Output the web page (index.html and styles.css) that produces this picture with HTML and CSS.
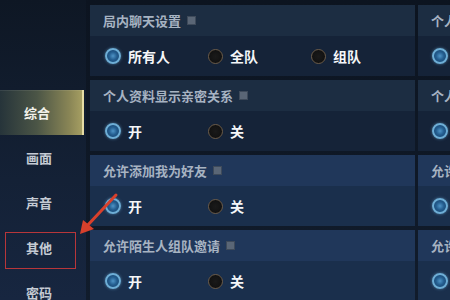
FILE: index.html
```html
<!DOCTYPE html>
<html lang="zh">
<head>
<meta charset="utf-8">
<link rel="stylesheet" href="styles.css">
</head>
<body>
<div class="page">
  <nav class="sidebar">
    <div class="tab active">综合</div>
    <div class="tab">画面</div>
    <div class="tab">声音</div>
    <div class="tab">其他</div>
    <div class="tab">密码</div>
  </nav>
  <main class="content">
    <div class="col main-col">
      <section class="card">
        <div class="card-head"><span class="title">局内聊天设置</span><span class="info"></span></div>
        <div class="opts">
          <div class="opt opt-a"><span class="radio on"></span><span class="lbl">所有人</span></div>
          <div class="opt opt-b"><span class="radio"></span><span class="lbl">全队</span></div>
          <div class="opt opt-c"><span class="radio"></span><span class="lbl">组队</span></div>
        </div>
      </section>
      <section class="card">
        <div class="card-head"><span class="title">个人资料显示亲密关系</span><span class="info"></span></div>
        <div class="opts">
          <div class="opt opt-a"><span class="radio on"></span><span class="lbl">开</span></div>
          <div class="opt opt-b"><span class="radio"></span><span class="lbl">关</span></div>
        </div>
      </section>
      <section class="card blue">
        <div class="card-head"><span class="title">允许添加我为好友</span><span class="info"></span></div>
        <div class="opts">
          <div class="opt opt-a"><span class="radio on"></span><span class="lbl">开</span></div>
          <div class="opt opt-b"><span class="radio"></span><span class="lbl">关</span></div>
        </div>
      </section>
      <section class="card blue">
        <div class="card-head"><span class="title">允许陌生人组队邀请</span><span class="info"></span></div>
        <div class="opts">
          <div class="opt opt-a"><span class="radio on"></span><span class="lbl">开</span></div>
          <div class="opt opt-b"><span class="radio"></span><span class="lbl">关</span></div>
        </div>
      </section>
    </div>
    <div class="col side-col">
      <section class="card">
        <div class="card-head"><span class="title">个人主页展示</span></div>
        <div class="opts"><div class="opt"><span class="radio on"></span><span class="lbl">开</span></div></div>
      </section>
      <section class="card">
        <div class="card-head"><span class="title">个人战绩展示</span></div>
        <div class="opts"><div class="opt"><span class="radio on"></span><span class="lbl">开</span></div></div>
      </section>
      <section class="card blue">
        <div class="card-head"><span class="title">允许查看资料</span></div>
        <div class="opts"><div class="opt"><span class="radio on"></span><span class="lbl">开</span></div></div>
      </section>
      <section class="card blue">
        <div class="card-head"><span class="title">允许观战</span></div>
        <div class="opts"><div class="opt"><span class="radio on"></span><span class="lbl">开</span></div></div>
      </section>
    </div>
  </main>
  <div class="mark-box"></div>
  <svg class="mark-arrow" width="50" height="50" viewBox="0 0 50 50">
    <line x1="42" y1="5" x2="12" y2="37" stroke="#d8402c" stroke-width="3" stroke-linecap="round"/>
    <polygon points="6,44 9,30 20,39" fill="#d8402c"/>
  </svg>
</div>
</body>
</html>
```
FILE: styles.css
```css
html, body {
  margin: 0;
  padding: 0;
}
body {
  width: 450px;
  height: 300px;
  overflow: hidden;
  background: #0d1624;
  font-family: "Noto Sans CJK SC", "Noto Sans", sans-serif;
}
.page {
  position: relative;
  display: flex;
  width: 450px;
  height: 300px;
  overflow: hidden;
  background: linear-gradient(180deg, #0c1420 0%, #111c2c 100%);
}
.sidebar {
  width: 86px;
  flex: none;
  padding-top: 90px;
  background: linear-gradient(180deg, #0e1724 0%, #142136 60%, #172640 100%);
  display: flex;
  flex-direction: column;
}
.tab {
  height: 45px;
  flex: none;
  display: flex;
  align-items: center;
  justify-content: center;
  padding-right: 8px;
  color: #c4cad3;
  font-size: 13px;
  font-weight: 700;
}
.tab.active {
  color: #f2f2ea;
  background: linear-gradient(90deg, #26343a 0%, #4b5546 45%, #8a8656 85%, #a59e62 100%);
  border-right: 2px solid #e6dca4;
  margin-right: 2px;
  box-shadow: inset 0 1px 0 rgba(255,255,255,0.08);
}
.content {
  flex: 1;
  display: flex;
  gap: 3px;
  padding: 5px 0 0 4px;
  min-width: 0;
}
.col {
  display: flex;
  flex-direction: column;
  gap: 4px;
}
.main-col {
  width: 325px;
  flex: none;
}
.side-col {
  flex: 1;
  min-width: 60px;
}
.card {
  flex: none;
  display: flex;
  flex-direction: column;
}
.card-head {
  height: 31px;
  display: flex;
  align-items: center;
  gap: 6px;
  padding-left: 13px;
  background: #1c2d42;
  white-space: nowrap;
  overflow: hidden;
}
.title {
  color: #a7b3c2;
  font-size: 13px;
  font-weight: 700;
}
.info {
  width: 7px;
  height: 7px;
  background: #5a6676;
  border: 1px solid #3e4a5a;
  box-sizing: content-box;
}
.opts {
  height: 40px;
  display: flex;
  align-items: center;
  background: #152338;
  white-space: nowrap;
  overflow: hidden;
}
.card.blue .card-head { background: #20375a; }
.card.blue .opts { background: #1a2f4c; }
.opt {
  display: flex;
  align-items: center;
  gap: 7px;
  padding-left: 15px;
}
.opt-a { width: 103px; padding-left: 15px; }
.opt-b { width: 103px; padding-left: 0; }
.opt-c { padding-left: 0; }
.side-col .opt { padding-left: 14px; }
.radio {
  width: 13px;
  height: 13px;
  border-radius: 50%;
  border: 1.5px solid #6b5b48;
  background: radial-gradient(circle, #1a1a1a 0%, #0e0e0e 100%);
  flex: none;
}
.radio.on {
  width: 12px;
  height: 12px;
  border: 2px solid #6eaed6;
  background: radial-gradient(circle, #4f94c6 0%, #245e90 45%, #153d66 100%);
  box-shadow: 0 0 3px rgba(110,174,214,0.6);
}
.lbl {
  color: #f4f6f8;
  font-size: 14px;
  font-weight: 700;
}
.mark-box {
  position: absolute;
  left: 5px;
  top: 232px;
  width: 69px;
  height: 35px;
  border: 1.5px solid #b8363a;
}
.mark-arrow {
  position: absolute;
  left: 74px;
  top: 190px;
}
```
